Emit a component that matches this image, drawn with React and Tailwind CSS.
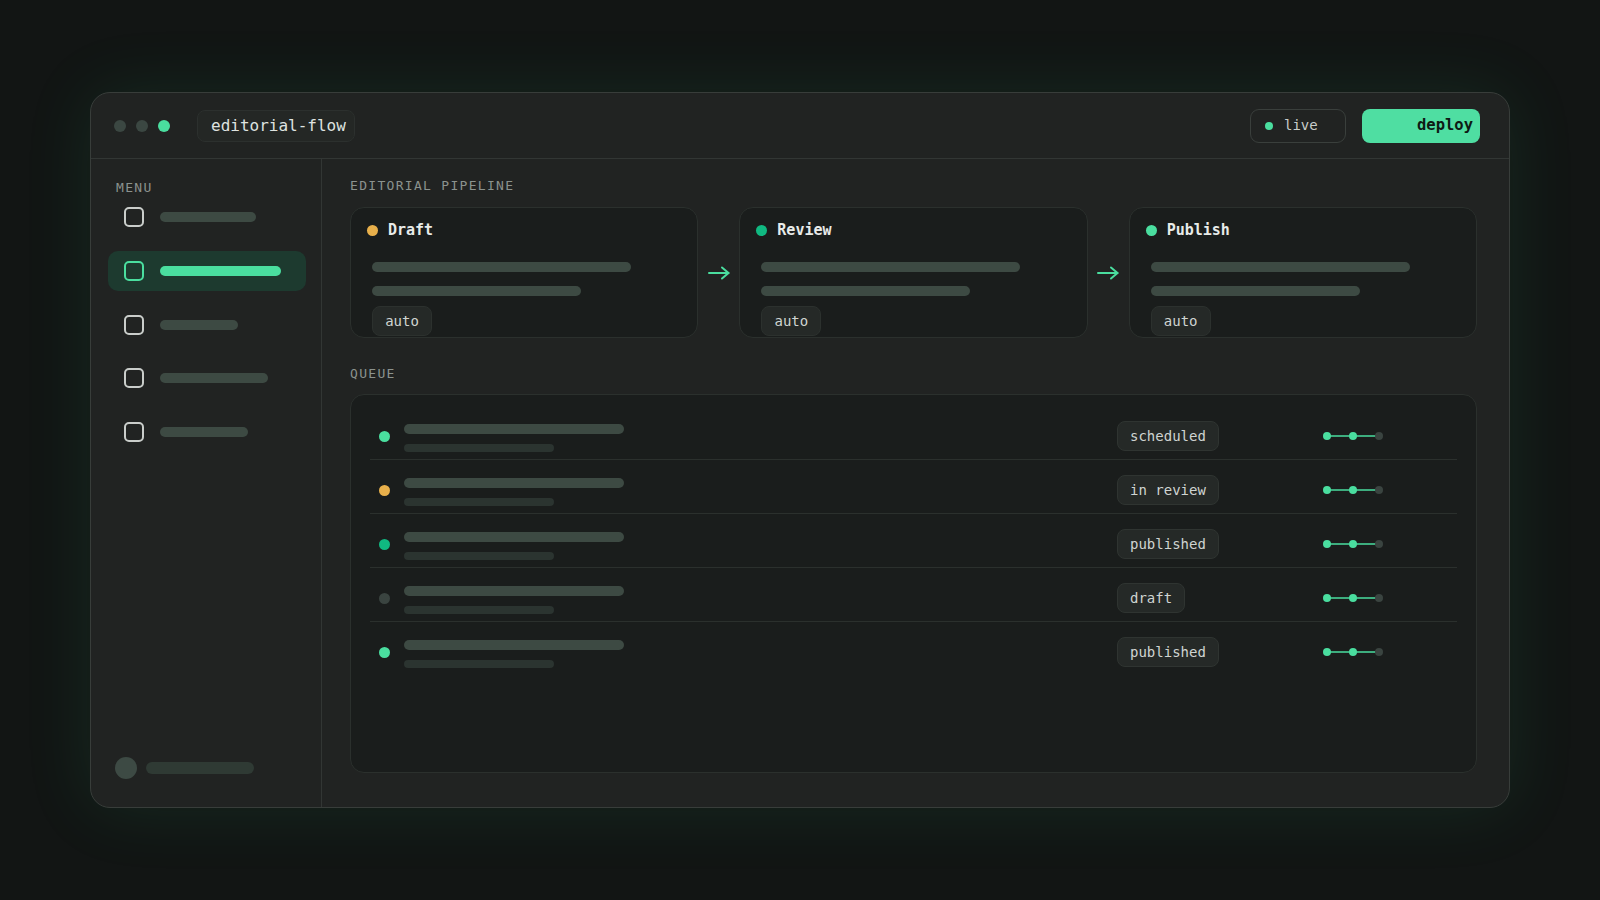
import React from "react";

const mono = { fontFamily: '"DejaVu Sans Mono", "Liberation Mono", monospace' };

function Arrow() {
  return (
    <div className="flex w-[41px] shrink-0 items-center justify-center">
      <svg width="22" height="14" viewBox="0 0 22 14" fill="none">
        <path d="M1 7H20.5" stroke="#4ade9f" strokeWidth="2" strokeLinecap="round" />
        <path d="M14 1.5L20.5 7L14 12.5" stroke="#4ade9f" strokeWidth="2" strokeLinecap="round" strokeLinejoin="round" />
      </svg>
    </div>
  );
}

function StageCard({ title, dot }) {
  return (
    <div className="flex h-[131px] flex-1 flex-col rounded-[14px] border border-[#2b302d] bg-[#1a1d1c] pl-[16px] pt-[13px]">
      <div className="flex h-[18px] items-center gap-[10px]">
        <span className={`h-[11px] w-[11px] rounded-full ${dot}`} />
        <span className="text-[15px] font-bold leading-[18px] text-[#e8ebe9]">{title}</span>
      </div>
      <div className="ml-[5px] mt-[23px] flex flex-col">
        <div className="h-[10px] w-[259px] rounded-full bg-[#3d4a43]" />
        <div className="mt-[14px] h-[10px] w-[209px] rounded-full bg-[#3d4a43]" />
        <div className="mt-[10px] flex h-[30px] w-[60px] items-center justify-center rounded-[8px] border border-[#2c312e] bg-[#252927] text-[14px] text-[#cfd4d1]">
          auto
        </div>
      </div>
    </div>
  );
}

function Track() {
  return (
    <svg width="60" height="10" viewBox="0 0 60 10">
      <line x1="4" y1="5" x2="56" y2="5" stroke="#4ade9f" strokeWidth="1.5" />
      <circle cx="4" cy="5" r="4" fill="#4ade9f" />
      <circle cx="30" cy="5" r="4" fill="#4ade9f" />
      <circle cx="56" cy="5" r="4" fill="#3a4440" />
    </svg>
  );
}

const rows = [
  { dot: "bg-[#4ade9f]", label: "scheduled" },
  { dot: "bg-[#e8b04b]", label: "in review" },
  { dot: "bg-[#10b981]", label: "published" },
  { dot: "bg-[#3a4440]", label: "draft" },
  { dot: "bg-[#4ade9f]", label: "published" },
];

const menu = [
  { w: "w-[96px]", active: false },
  { w: "w-[121px]", active: true },
  { w: "w-[78px]", active: false },
  { w: "w-[108px]", active: false },
  { w: "w-[88px]", active: false },
];

export default function App() {
  return (
    <div className="flex h-[900px] w-full items-center justify-center bg-[#121514]" style={mono}>
      <div className="flex h-[716px] w-[1420px] flex-col overflow-hidden rounded-[20px] border border-[#383d3a] bg-[#212322] shadow-[0_0_70px_rgba(50,200,130,0.11)]">
        {/* header */}
        <div className="flex h-[66px] shrink-0 items-center border-b border-[#323634] pl-[23px] pr-[29px]">
          <div className="flex items-center gap-[10px]">
            <span className="h-[12px] w-[12px] rounded-full bg-[#3b4742]" />
            <span className="h-[12px] w-[12px] rounded-full bg-[#3b4742]" />
            <span className="h-[12px] w-[12px] rounded-full bg-[#4ade9f]" />
          </div>
          <div className="ml-[27px] flex h-[32px] items-center rounded-[8px] border border-[#2c302e] bg-[#242725] pl-[13px] pr-[8px] text-[16px] text-[#dfe3e0]">
            editorial-flow
          </div>
          <div className="ml-auto flex items-center gap-[16px]">
            <div className="flex h-[34px] w-[96px] items-center gap-[11px] rounded-[9px] border border-[#3a3f3c] pl-[14px] text-[14px] text-[#c8ccc9]">
              <span className="h-[8px] w-[8px] rounded-full bg-[#4ade9f]" />
              live
            </div>
            <div className="flex h-[34px] w-[118px] items-center justify-end rounded-[8px] bg-[#4fdea2] pr-[7px] text-[15.5px] font-bold text-[#0e1a14]">
              deploy
            </div>
          </div>
        </div>

        <div className="flex min-h-0 flex-1">
          {/* sidebar */}
          <div className="flex w-[231px] shrink-0 flex-col border-r border-[#323634] pb-[28px] pl-[17px] pr-[15px] pt-[21px]">
            <div className="pl-[8px] text-[13px] leading-[16px] tracking-[0.1em] text-[#8b928e]">MENU</div>
            <div className="mt-[1px] flex flex-col gap-[13.75px]">
              {menu.map((m, i) => (
                <div
                  key={i}
                  className={`flex h-[40px] items-center gap-[16px] rounded-[10px] px-[16px] ${m.active ? "bg-[#1d3a2f]" : ""}`}
                >
                  <span
                    className={`h-[20px] w-[20px] rounded-[5px] border-2 ${m.active ? "border-[#4ade9f]" : "border-[#c9cdca]"}`}
                  />
                  <span className={`h-[10px] rounded-full ${m.w} ${m.active ? "bg-[#4ade9f]" : "bg-[#3d4a43]"}`} />
                </div>
              ))}
            </div>
            <div className="mt-auto flex items-center gap-[9px] pl-[7px]">
              <span className="h-[22px] w-[22px] rounded-full bg-[#3d4a44]" />
              <span className="h-[12px] w-[108px] rounded-full bg-[#2f3a34]" />
            </div>
          </div>

          {/* main */}
          <div className="flex min-w-0 flex-1 flex-col pb-[34px] pl-[28px] pr-[32px] pt-[19px]">
            <div className="text-[13px] leading-[16px] tracking-[0.1em] text-[#8b928e]">EDITORIAL PIPELINE</div>
            <div className="mt-[13px] flex">
              <StageCard title="Draft" dot="bg-[#e8b04b]" />
              <Arrow />
              <StageCard title="Review" dot="bg-[#10b981]" />
              <Arrow />
              <StageCard title="Publish" dot="bg-[#4ade9f]" />
            </div>
            <div className="mt-[28px] text-[13px] leading-[16px] tracking-[0.1em] text-[#8b928e]">QUEUE</div>
            <div className="mt-[12px] flex-1 rounded-[14px] border border-[#2b302d] bg-[#1a1d1c] px-[19px] pt-[11px]">
              {rows.map((r, i) => (
                <div
                  key={i}
                  className={`flex items-center pb-[8px] pl-[9px] pt-[15px] ${i < rows.length - 1 ? "border-b border-[#2b302d]" : ""}`}
                >
                  <span className={`h-[11px] w-[11px] shrink-0 rounded-full ${r.dot}`} />
                  <div className="ml-[14px] flex h-[30px] flex-1 flex-col pt-[3px]">
                    <div className="h-[10px] w-[220px] shrink-0 rounded-full bg-[#3d4a43]" />
                    <div className="mt-[10px] h-[8px] w-[150px] shrink-0 rounded-full bg-[#2b3430]" />
                  </div>
                  <div className="w-[206px] shrink-0">
                    <span className="inline-flex h-[30px] items-center rounded-[8px] border border-[#2f3431] bg-[#252927] px-[12px] text-[14px] text-[#cfd4d1]">
                      {r.label}
                    </span>
                  </div>
                  <div className="mr-[74px] flex w-[60px] shrink-0 items-center">
                    <Track />
                  </div>
                </div>
              ))}
            </div>
          </div>
        </div>
      </div>
    </div>
  );
}
